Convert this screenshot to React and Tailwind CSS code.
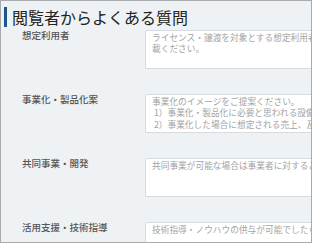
import React from 'react';

const rows = [
  {
    label: '想定利用者',
    lines: ['ライセンス・譲渡を対象とする想定利用者をご記', '載ください。'],
  },
  {
    label: '事業化・製品化案',
    lines: [
      '事業化のイメージをご提案ください。',
      ' 1）事業化・製品化に必要と思われる設備',
      ' 2）事業化した場合に想定される売上、及',
    ],
  },
  {
    label: '共同事業・開発',
    lines: ['共同事業が可能な場合は事業者に対するご'],
  },
  {
    label: '活用支援・技術指導',
    lines: ['技術指導・ノウハウの供与が可能でしたら'],
  },
];

export default function App() {
  return (
    <div className="w-[312px] h-[243px] overflow-hidden border border-[#a8abae] bg-[#eef2f5] font-['Noto_Sans_CJK_JP',sans-serif]">
      <div className="flex items-center mt-[6px] ml-[3px]">
        <div className="w-[3px] h-[20px] bg-[#1d5489]" />
        <h1 className="ml-[5px] text-[16px] leading-[20px] text-[#222] whitespace-nowrap">閲覧者からよくある質問</h1>
      </div>
      <div className="mt-[3px] flex flex-col gap-[25px]">
        {rows.map(row => (
          <div key={row.label} className="flex">
            <div className="w-[144px] shrink-0 pl-[21px] text-[9.5px] leading-[10px] text-[#555] font-medium whitespace-nowrap">
              {row.label}
            </div>
            <div className="w-[220px] shrink-0 h-[39px] bg-white border border-[#d6dbe0] rounded-[2px] pl-[6px] pt-[0.5px] text-[8.7px] leading-[11.5px] text-[#a3a3a3] whitespace-pre overflow-hidden">
              {row.lines.map(line => (
                <div key={line}>{line}</div>
              ))}
            </div>
          </div>
        ))}
      </div>
    </div>
  );
}
